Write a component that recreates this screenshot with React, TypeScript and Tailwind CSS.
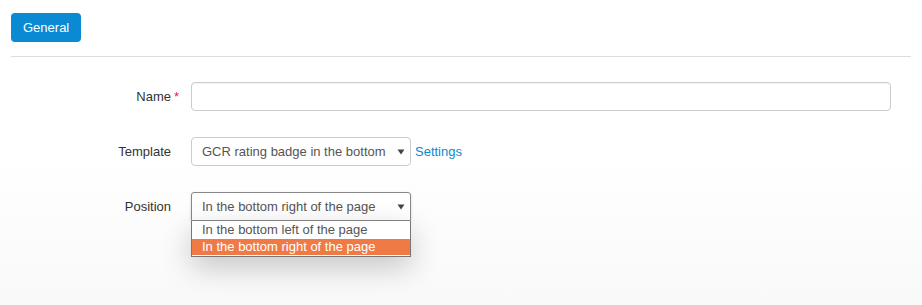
import { useState } from "react";

const positions = ["In the bottom left of the page", "In the bottom right of the page"];

const Arrow = () => (
  <svg width="8" height="6" viewBox="0 0 8 6" className="shrink-0">
    <path d="M0.5 0.5h7L4 5.5z" fill="#444" />
  </svg>
);

const Label = ({ text, required }: { text: string; required?: boolean }) => (
  <div className="relative text-right text-[13px] text-[#333] leading-[29px]">
    {text}
    {required && <span className="absolute left-full ml-[3px] top-0 text-[#e0245e]">*</span>}
  </div>
);

export default function App() {
  const [position, setPosition] = useState(positions[1]);

  return (
    <div className="h-[305px] w-full overflow-hidden bg-gradient-to-b from-white from-50% to-[#f9f9f9] font-['Liberation_Sans',Arial,sans-serif] px-[11px] pt-[13px]">
      {/* Tabs */}
      <button className="h-[29px] px-3 rounded-[4px] bg-[#0a8ad2] text-white text-[13px]">General</button>
      <div className="mt-[14px] border-t border-[#ddd]" />

      {/* Form */}
      <div className="grid grid-cols-[160px_1fr] gap-x-5 gap-y-[26px] pt-[25px] pr-5">
        <Label text="Name" required />
        <input className="h-[29px] w-full rounded-[4px] border border-[#ccc] bg-white px-2 text-[13px] shadow-[inset_0_1px_1px_rgba(0,0,0,0.05)] outline-none" />

        <Label text="Template" />
        <div className="flex items-center">
          <div className="flex h-[29px] w-[220px] items-center justify-between rounded-[4px] border border-[#ccc] bg-white pl-[10px] pr-[5px] text-[13px] text-[#555]">
            <span>GCR rating badge in the bottom</span>
            <Arrow />
          </div>
          <a className="ml-1 text-[13px] text-[#0a8ad2]">Settings</a>
        </div>

        <Label text="Position" />
        <div className="relative w-[220px]">
          <div className="flex h-[29px] items-center justify-between rounded-t-[3px] border border-[#888] bg-white pl-[10px] pr-[5px] text-[13px] text-[#555] shadow-[0_1px_3px_rgba(0,0,0,0.15)]">
            <span>{position}</span>
            <Arrow />
          </div>
          <ul className="absolute left-0 top-[29px] w-[220px] border border-[#777] border-t-0 bg-white pb-[1px] text-[13px] shadow-[0_10px_30px_rgba(0,0,0,0.22)]">
            {positions.map((p, i) => (
              <li
                key={p}
                onClick={() => setPosition(p)}
                className={`pl-[10px] ${i === 0 ? "h-[18px] leading-[18px]" : "h-[16px] leading-[16px]"} ${
                  p === position ? "bg-[#ef7a45] text-white" : "text-[#555]"
                }`}
              >
                {p}
              </li>
            ))}
          </ul>
        </div>
      </div>
    </div>
  );
}
